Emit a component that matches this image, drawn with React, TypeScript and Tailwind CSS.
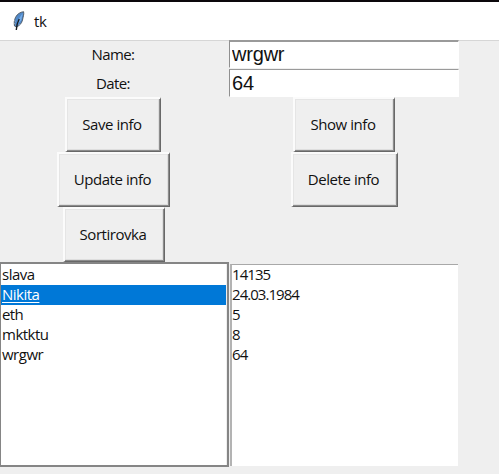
import type { ReactNode } from 'react';

function TkButton({ className, children }: { className: string; children: ReactNode }) {
  return (
    <button
      className={`h-[55px] shrink-0 border-t-2 border-l-2 border-r border-b border-t-[#fbfbfb] border-l-[#fbfbfb] border-r-[#686868] border-b-[#686868] bg-[#efefef] pr-[3px] pb-[2px] text-center text-[15px] tracking-[-0.45px] whitespace-nowrap shadow-[inset_-1px_-1px_0_#8c8c8c,inset_-2px_-2px_0_#dedede,inset_1px_1px_0_#e5e5e5] ${className}`}
    >
      {children}
    </button>
  );
}

function Feather() {
  return (
    <svg width="12" height="20" viewBox="0 0 12 20" className="shrink-0">
      <path d="M10.6.7C7.4 1 4.2 3 2.6 6.2 1.2 9 .9 12 1.5 15l1.7 1c3-1.1 5.5-3.4 6.3-7 .5-2.8 1.7-5.7 1.1-8.3Z" fill="#5088c8" stroke="#4b545c" strokeWidth=".9" />
      <path d="M9.8 2 5.4 8.6 4 13.4 8.2 9.4Z" fill="#74ace9" />
      <path d="M6.2 8C4.6 10.8 3.6 14.2 3.3 19" fill="none" stroke="#171c20" strokeWidth="1.4" />
      <path d="m1.1 9.2 1.5 1.4M1 12l1.6 1.2M5.6 14.1l1.6-1" stroke="#a6adb1" strokeWidth=".8" />
    </svg>
  );
}

const names = [
  { text: 'slava', style: 'tracking-[-0.5px]' },
  { text: 'Nikita', style: 'tracking-[-0.5px]' },
  { text: 'eth', style: 'tracking-[-0.6px]' },
  { text: 'mktktu', style: 'tracking-[-0.5px]' },
  { text: 'wrgwr', style: 'tracking-[-0.5px]' },
];
const dates = ['14135', '24.03.1984', '5', '8', '64'];

export default function App() {
  return (
    <div className="flex h-[474px] w-[499px] flex-col overflow-hidden bg-[#efefef] font-['Open_Sans',sans-serif] text-[15px] text-[#111111]">
      <header className="flex h-[41px] shrink-0 items-center border-t-2 border-b border-t-[#0c080c] border-b-[#d6d6d6] bg-white pb-px pl-[13px]">
        <Feather />
        <span className="ml-[9px] leading-5 tracking-[-0.4px]">tk</span>
      </header>
      <main className="-mt-px grid w-[459px] grid-cols-[229px_230px] grid-rows-[29px_28px_55px_55px_55px_205px]">
        <label className="flex items-center justify-center pr-[3px] tracking-[-0.6px]">Name:</label>
        <input
          aria-label="Name"
          defaultValue="wrgwr"
          className="h-[28px] w-[230px] border-t-2 border-l border-r border-b border-t-[#9a9a9a] border-l-[#8f8f8f] border-r-white border-b-white bg-white pl-[2px] font-['Liberation_Sans',sans-serif] text-[20px] leading-6 tracking-[-0.2px] outline-none"
        />
        <label className="flex items-center justify-center pr-[3px] tracking-[-0.6px]">Date:</label>
        <input
          aria-label="Date"
          defaultValue="64"
          className="h-[28px] w-[230px] border-t border-l border-r border-b border-t-[#9a9a9a] border-l-[#8f8f8f] border-r-white border-b-white bg-white pl-[2px] font-['Liberation_Sans',sans-serif] text-[20px] leading-6 tracking-[-0.2px] outline-none"
        />
        <div className="flex pl-[65px]"><TkButton className="w-[96px]">Save info</TkButton></div>
        <div className="flex pl-[64px]"><TkButton className="w-[102px]">Show info</TkButton></div>
        <div className="flex pl-[57px]"><TkButton className="w-[113px]">Update info</TkButton></div>
        <div className="flex pl-[62px]"><TkButton className="w-[107px]">Delete info</TkButton></div>
        <div className="flex pl-[63px]"><TkButton className="w-[102px]">Sortirovka</TkButton></div>
        <div />
        <ul className="h-[205px] w-[229px] border-t-2 border-r-2 border-b-2 border-l border-[#858585] bg-white pt-px shadow-[inset_-1px_0_0_#eeeeee]">
          {names.map((item) => (
            <li
              key={item.text}
              className={`mr-px h-5 pl-px leading-[18px] ${item.style} ${item.text === 'Nikita' ? 'bg-[#0078d7] text-white underline underline-offset-2' : ''}`}
            >
              {item.text}
            </li>
          ))}
        </ul>
        <ul className="mt-[2px] ml-px h-[202px] w-[228px] border-t border-l-2 border-t-[#a8a8a8] border-l-[#b3b3b3] bg-white tracking-[-0.95px]">
          {dates.map((date) => <li key={date} className="h-5 leading-[18px]">{date}</li>)}
        </ul>
      </main>
    </div>
  );
}
